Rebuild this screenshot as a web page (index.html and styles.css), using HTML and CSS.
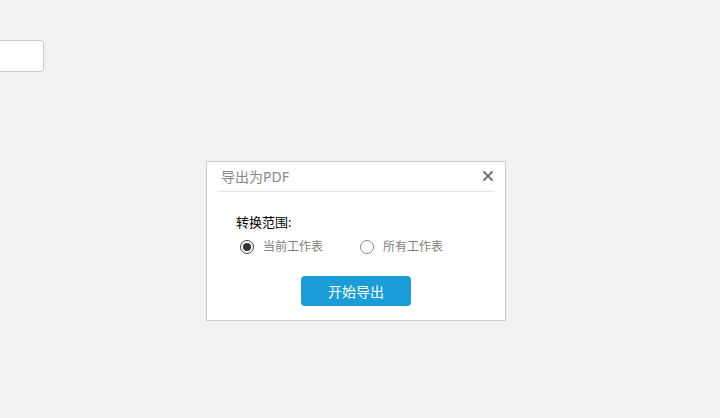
FILE: index.html
```html
<!DOCTYPE html>
<html lang="zh">
<head>
<meta charset="utf-8">
<title>导出为PDF</title>
<link rel="stylesheet" href="styles.css">
</head>
<body>
<input class="field" type="text">
<div class="dialog">
  <div class="dlg-head">
    <span class="dlg-title">导出为PDF</span>
    <span class="dlg-close"><svg width="10" height="10" viewBox="0 0 10 10"><path d="M1 1L9 9M9 1L1 9" stroke="#777" stroke-width="2.2" stroke-linecap="square"/></svg></span>
  </div>
  <div class="dlg-body">
    <div class="range-label">转换范围:</div>
    <div class="radio-row">
      <label class="radio"><span class="dot checked"></span><span class="radio-text">当前工作表</span></label>
      <label class="radio"><span class="dot"></span><span class="radio-text">所有工作表</span></label>
    </div>
  </div>
  <div class="dlg-foot">
    <button class="btn-primary">开始导出</button>
  </div>
</div>
</body>
</html>
```
FILE: styles.css
```css
html, body {
  margin: 0;
  padding: 0;
  background: #f2f2f2;
  font-family: "Noto Sans", "Noto Sans CJK SC", sans-serif;
}
body {
  width: 720px;
  height: 418px;
  position: relative;
  overflow: hidden;
}
.field {
  display: block;
  box-sizing: border-box;
  margin: 40px 0 0 -100px;
  width: 144px;
  height: 32px;
  border: 1px solid #cccccc;
  border-radius: 3px;
  background: #fff;
  outline: none;
}
.dialog {
  position: absolute;
  left: 206px;
  top: 161px;
  width: 300px;
  height: 160px;
  box-sizing: border-box;
  border: 1px solid #cccccc;
  background: #ffffff;
}
.dlg-head {
  margin: 0 11px;
  height: 29px;
  border-bottom: 1px solid #e5e5e5;
  display: flex;
  align-items: center;
  justify-content: space-between;
  padding: 0 1px 0 3px;
}
.dlg-title {
  font-size: 14px;
  color: #888888;
  line-height: 29px;
}
.dlg-close {
  display: flex;
  width: 10px;
  height: 10px;
  margin-top: -1px;
}
.dlg-body {
  padding: 21px 0 0 29px;
}
.range-label {
  font-size: 13px;
  line-height: 18px;
  color: #000;
}
.radio-row {
  margin-top: 6px;
  height: 20px;
  display: flex;
  align-items: center;
  padding-left: 4px;
}
.radio {
  display: flex;
  align-items: center;
  margin-right: 37px;
}
.dot {
  width: 14px;
  height: 14px;
  box-sizing: border-box;
  border: 1px solid #8a8a8a;
  border-radius: 50%;
  display: flex;
  align-items: center;
  justify-content: center;
}
.dot.checked {
  border-color: #444;
}
.dot.checked::after {
  content: "";
  width: 8px;
  height: 8px;
  border-radius: 50%;
  background: #333;
}
.radio-text {
  margin-left: 9px;
  font-size: 12px;
  color: #808080;
  line-height: 20px;
}
.dlg-foot {
  display: flex;
  justify-content: center;
  margin-top: 19px;
}
.btn-primary {
  width: 110px;
  height: 30px;
  border: none;
  border-radius: 4px;
  background: #1a9cd6;
  color: #fff;
  font-family: "Noto Sans", "Noto Sans CJK SC", sans-serif;
  font-size: 14px;
  padding: 0;
}
```
